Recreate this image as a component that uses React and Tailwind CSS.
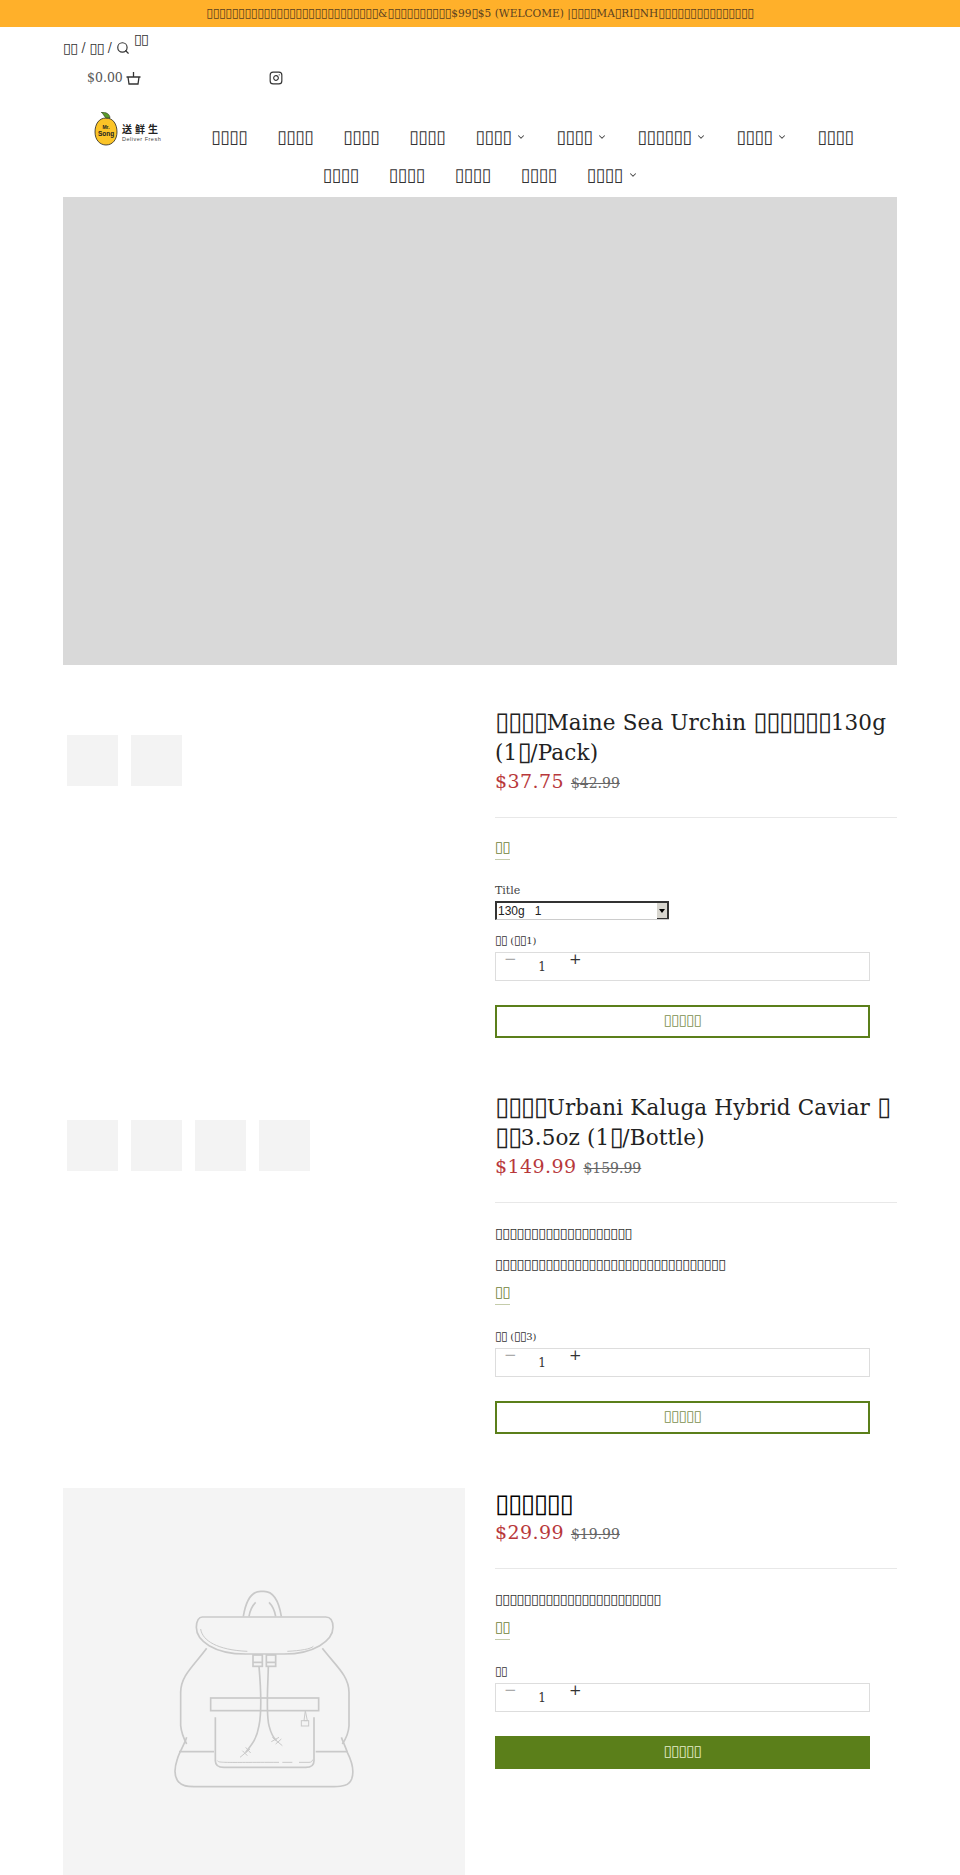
import React from 'react';
import { Search, Instagram, ChevronDown } from 'lucide-react';

// The reference draws its Chinese copy as missing-glyph boxes and the characters
// can't be read back from it, so each one is kept as a box character here.
function X({ n = 1 }) {
  return <span className="text-[1.2em] leading-none tracking-[-0.05em]">{'\u25AF'.repeat(n)}</span>;
}

const serif = "font-['DejaVu_Serif',serif]";

function Logo() {
  return (
    <svg width="70" height="36" viewBox="0 0 70 36" className="block">
      <path d="M13 6 C6 6 2 12 2 20 C2 28 7 33 13 33 C20 33 24 27 24 20 C24 12 20 6 13 6 Z" fill="#fbc427" stroke="#222" strokeWidth="0.8" />
      <path d="M13 6 C10 3 10 1 8 0 C13 0 17 2 17 6 Z" fill="#5a9a2a" stroke="#222" strokeWidth="0.5" />
      <text x="13" y="17" textAnchor="middle" fontSize="5" fontWeight="700" fill="#222" fontFamily="Liberation Sans">Mr.</text>
      <text x="13" y="24" textAnchor="middle" fontSize="6.5" fontWeight="700" fill="#222" fontFamily="Liberation Sans">Song</text>
      <text x="29" y="21" fontSize="10" letterSpacing="3" fontWeight="700" fill="#222" fontFamily="Noto Sans CJK SC">送鲜生</text>
      <text x="29" y="29" fontSize="5.5" letterSpacing="0.5" fill="#444" fontFamily="Liberation Sans">Deliver Fresh</text>
    </svg>
  );
}

function Basket() {
  return (
    <svg width="15" height="14" viewBox="0 0 15 14" fill="none" stroke="#333" strokeWidth="1.3">
      <path d="M0.5 6 H14.5 M2 6 L3 13 H12 L13 6 M7.5 6 V1" />
    </svg>
  );
}

function Backpack() {
  return (
    <svg width="180" height="200" viewBox="70 60 540 600" fill="none" stroke="#c9c9c9" strokeWidth="5">
      <path d="M278 142 C285 100 300 67 330 67 H340 C370 67 385 100 392 142" />
      <path d="M295 142 C298 125 305 110 315 100 M375 142 C372 125 365 110 355 100" />
      <path d="M155 144 H525 C540 144 547 155 547 175 C547 215 490 255 400 255 H285 C190 255 137 215 137 175 C137 155 145 144 155 144 Z" />
      <path d="M150 180 C155 215 200 243 290 247 M410 247 C450 245 480 240 488 232" strokeWidth="3" />
      <path d="M168 238 C130 290 90 320 90 370 V470 C92 490 100 510 108 525" />
      <path d="M515 238 C555 290 595 320 595 370 V470 C594 490 585 510 575 525" />
      <path d="M108 505 C100 530 85 550 80 570 C70 600 70 625 85 640 C95 652 110 653 130 653 H550 C575 653 595 650 603 630 C612 605 600 570 590 550 C585 535 578 520 572 505" />
      <path d="M85 548 H190 M495 548 H590" />
      <rect x="307" y="258" width="28" height="34" />
      <rect x="347" y="258" width="28" height="34" />
      <path d="M307 280 H335 M347 280 H375" />
      <rect x="180" y="387" width="324" height="38" />
      <path d="M194 445 V575 C194 590 205 595 220 595 H465 C480 595 490 590 490 575 V445" />
      <path d="M200 575 C205 582 215 580 385 580 M395 580 H425 M445 580 H475 C482 580 484 578 486 572" strokeWidth="3" />
      <path d="M464 425 L460 455 H470 Z" strokeWidth="3" />
      <rect x="452" y="455" width="22" height="16" strokeWidth="3" />
      <path d="M325 292 C330 350 335 420 325 470 C318 510 305 525 285 550" />
      <path d="M353 292 C352 350 345 430 355 470 C360 490 365 505 378 515" />
      <path d="M268 565 L298 540 M275 545 L290 560 M285 535 L300 552 M365 505 L395 530 M362 518 L385 505 M375 525 L392 510" strokeWidth="3" />
    </svg>
  );
}

function Qty({ className = '' }) {
  return (
    <div className={`w-[375px] h-[29px] border border-[#ddd] flex items-start text-[#333] ${className}`}>
      <span className="w-[23px] pl-[8px] text-[15px] leading-[12px] text-[#aaa]">−</span>
      <span className="w-[46px] pt-[6px] text-center text-[12px] leading-[16px]">1</span>
      <span className="pl-[4px] text-[15px] leading-[12px]">+</span>
    </div>
  );
}

function Price({ now, was }) {
  return (
    <div className="flex items-baseline gap-[7px] leading-[26px]">
      <span className="text-[19px] tracking-[0.4px] text-[#b8383b]">{now}</span>
      <span className="text-[14px] text-[#666] line-through">{was}</span>
    </div>
  );
}

function More() {
  return (
    <div className="text-[12.5px] leading-[20px] text-[#6f8238]">
      <span className="inline-block border-b border-[#c5ccab] pb-[1px]"><X n={2} /></span>
    </div>
  );
}

function AddButton({ filled }) {
  const look = filled ? 'bg-[#5b7f1a] text-[#e6eecb]' : 'border-2 border-[#5b7f1a] text-[#7c8f50]';
  return (
    <button className={`block mt-[24px] w-[375px] h-[33px] text-[12.5px] text-center ${look}`}><X n={5} /></button>
  );
}

function TitleSelect() {
  return (
    <div className="mt-[3px] w-[174px] h-[19px] flex border-t-2 border-l-2 border-t-[#333] border-l-[#333] border-b border-b-[#ccc] bg-white">
      <span className="flex-1 pl-[1px] text-[12px] leading-[16px] text-[#222] font-['Liberation_Sans',sans-serif] whitespace-pre">130g   1</span>
      <span className="w-[12px] bg-[#d8d6cf] border-r-2 border-b border-[#333] flex items-center justify-center">
        <span className="w-0 h-0 border-x-[3px] border-x-transparent border-t-[4px] border-t-black" />
      </span>
    </div>
  );
}

function Thumbs({ count, className = '' }) {
  return (
    <div className={`flex gap-[13px] pl-[4px] ${className}`}>
      {Array.from({ length: count }, (_, i) => (
        <div key={i} className="w-[51px] h-[51px] bg-[#f3f3f3]" />
      ))}
    </div>
  );
}

function NavItem({ n = 4, caret }) {
  return (
    <span className="h-[20px] flex items-center gap-[5px]">
      <X n={n} />
      {caret && <ChevronDown size={10} strokeWidth={2.5} className="text-[#444]" />}
    </span>
  );
}

export default function App() {
  return (
    <div className={`h-[1875px] overflow-hidden bg-white text-[#222] ${serif}`}>
      <div className="h-[27px] bg-[#ffb02a] text-center text-[10.6px] leading-[27px] text-[#5a4020]">
        <X n={27} />&<X n={10} />$99<X />$5 (WELCOME) |<X n={4} />MA<X />RI<X />NH<X n={15} />
      </div>

      <div className="px-[63px]">
        <div className="h-[33px] pt-[5px] flex items-start text-[12px] text-[#333]">
          <span className="mt-[7px] flex items-center gap-[4px]"><X n={2} /> / <X n={2} /> / <Search size={14} /></span>
          <span className="ml-[4px] leading-[16px]"><X n={2} /></span>
        </div>
        <div className="h-[30px] pl-[24px] mt-[3px] flex items-center text-[12.5px] text-[#555]">
          <span className="mr-[3px]">$0.00</span>
          <Basket />
          <Instagram size={14} className="ml-[128px] text-[#333]" />
        </div>
        <div className="mt-[19px] flex items-start text-[15px] leading-[20px] text-[#333]">
          <div className="ml-[30px] w-[118px]"><Logo /></div>
          <nav className="mt-[15px] flex gap-x-[30px]">
            <NavItem /><NavItem /><NavItem /><NavItem />
            <NavItem caret /><NavItem caret /><NavItem n={6} caret /><NavItem caret /><NavItem />
          </nav>
        </div>
        <nav className="mt-[17px] flex justify-center gap-x-[30px] text-[15px] leading-[20px] text-[#333]">
          <NavItem /><NavItem /><NavItem /><NavItem /><NavItem caret />
        </nav>

        <div className="mt-[12px] h-[468px] bg-[#d9d9d9]" />

        <section className="mt-[43px] grid grid-cols-[402px_402px] gap-x-[30px]">
          <Thumbs count={2} className="mt-[27px]" />
          <div>
            <h2 className="text-[21.5px] leading-[30px] tracking-[0.15px] text-[#222] font-normal"><X n={4} />Maine Sea Urchin <X n={6} />130g (1<X />/Pack)</h2>
            <Price now="$37.75" was="$42.99" />
            <hr className="mt-[21px] mb-[20px] border-[#e8e8e8]" />
            <More />
            <div className="mt-[24px] text-[11px] leading-[14px] text-[#444]">Title</div>
            <TitleSelect />
            <div className="mt-[14px] text-[10px] leading-[14px] text-[#333]"><X n={2} /> (<X n={2} />1)</div>
            <Qty className="mt-[4px]" />
            <AddButton />
          </div>
        </section>

        <section className="mt-[55px] grid grid-cols-[402px_402px] gap-x-[30px]">
          <Thumbs count={4} className="mt-[27px]" />
          <div>
            <h2 className="text-[21.5px] leading-[30px] tracking-[0.15px] text-[#222] font-normal"><X n={4} />Urbani Kaluga Hybrid Caviar <X /><wbr /><X n={2} />3.5oz (1<X />/Bottle)</h2>
            <Price now="$149.99" was="$159.99" />
            <hr className="mt-[21px] mb-[21px] border-[#e8e8e8]" />
            <p className="text-[12px] leading-[20px] text-[#333]"><X n={19} /></p>
            <p className="mt-[11px] text-[12px] leading-[20px] text-[#333]"><X n={32} /></p>
            <div className="mt-[8px]"><More /></div>
            <div className="mt-[25px] text-[10px] leading-[14px] text-[#333]"><X n={2} /> (<X n={2} />3)</div>
            <Qty className="mt-[4px]" />
            <AddButton />
          </div>
        </section>

        <section className="mt-[54px] grid grid-cols-[402px_402px] gap-x-[30px]">
          <div className="h-[402px] bg-[#f4f4f4] flex items-center justify-center"><Backpack /></div>
          <div className="pt-[3px]">
            <h2 className="text-[21.5px] leading-[28px] text-black font-normal"><X n={6} /></h2>
            <Price now="$29.99" was="$19.99" />
            <hr className="mt-[21px] mb-[21px] border-[#e8e8e8]" />
            <p className="text-[12px] leading-[20px] text-[#333]"><X n={23} /></p>
            <div className="mt-[8px]"><More /></div>
            <div className="mt-[25px] text-[10px] leading-[14px] text-[#333]"><X n={2} /></div>
            <Qty className="mt-[4px]" />
            <AddButton filled />
          </div>
        </section>
      </div>
    </div>
  );
}
